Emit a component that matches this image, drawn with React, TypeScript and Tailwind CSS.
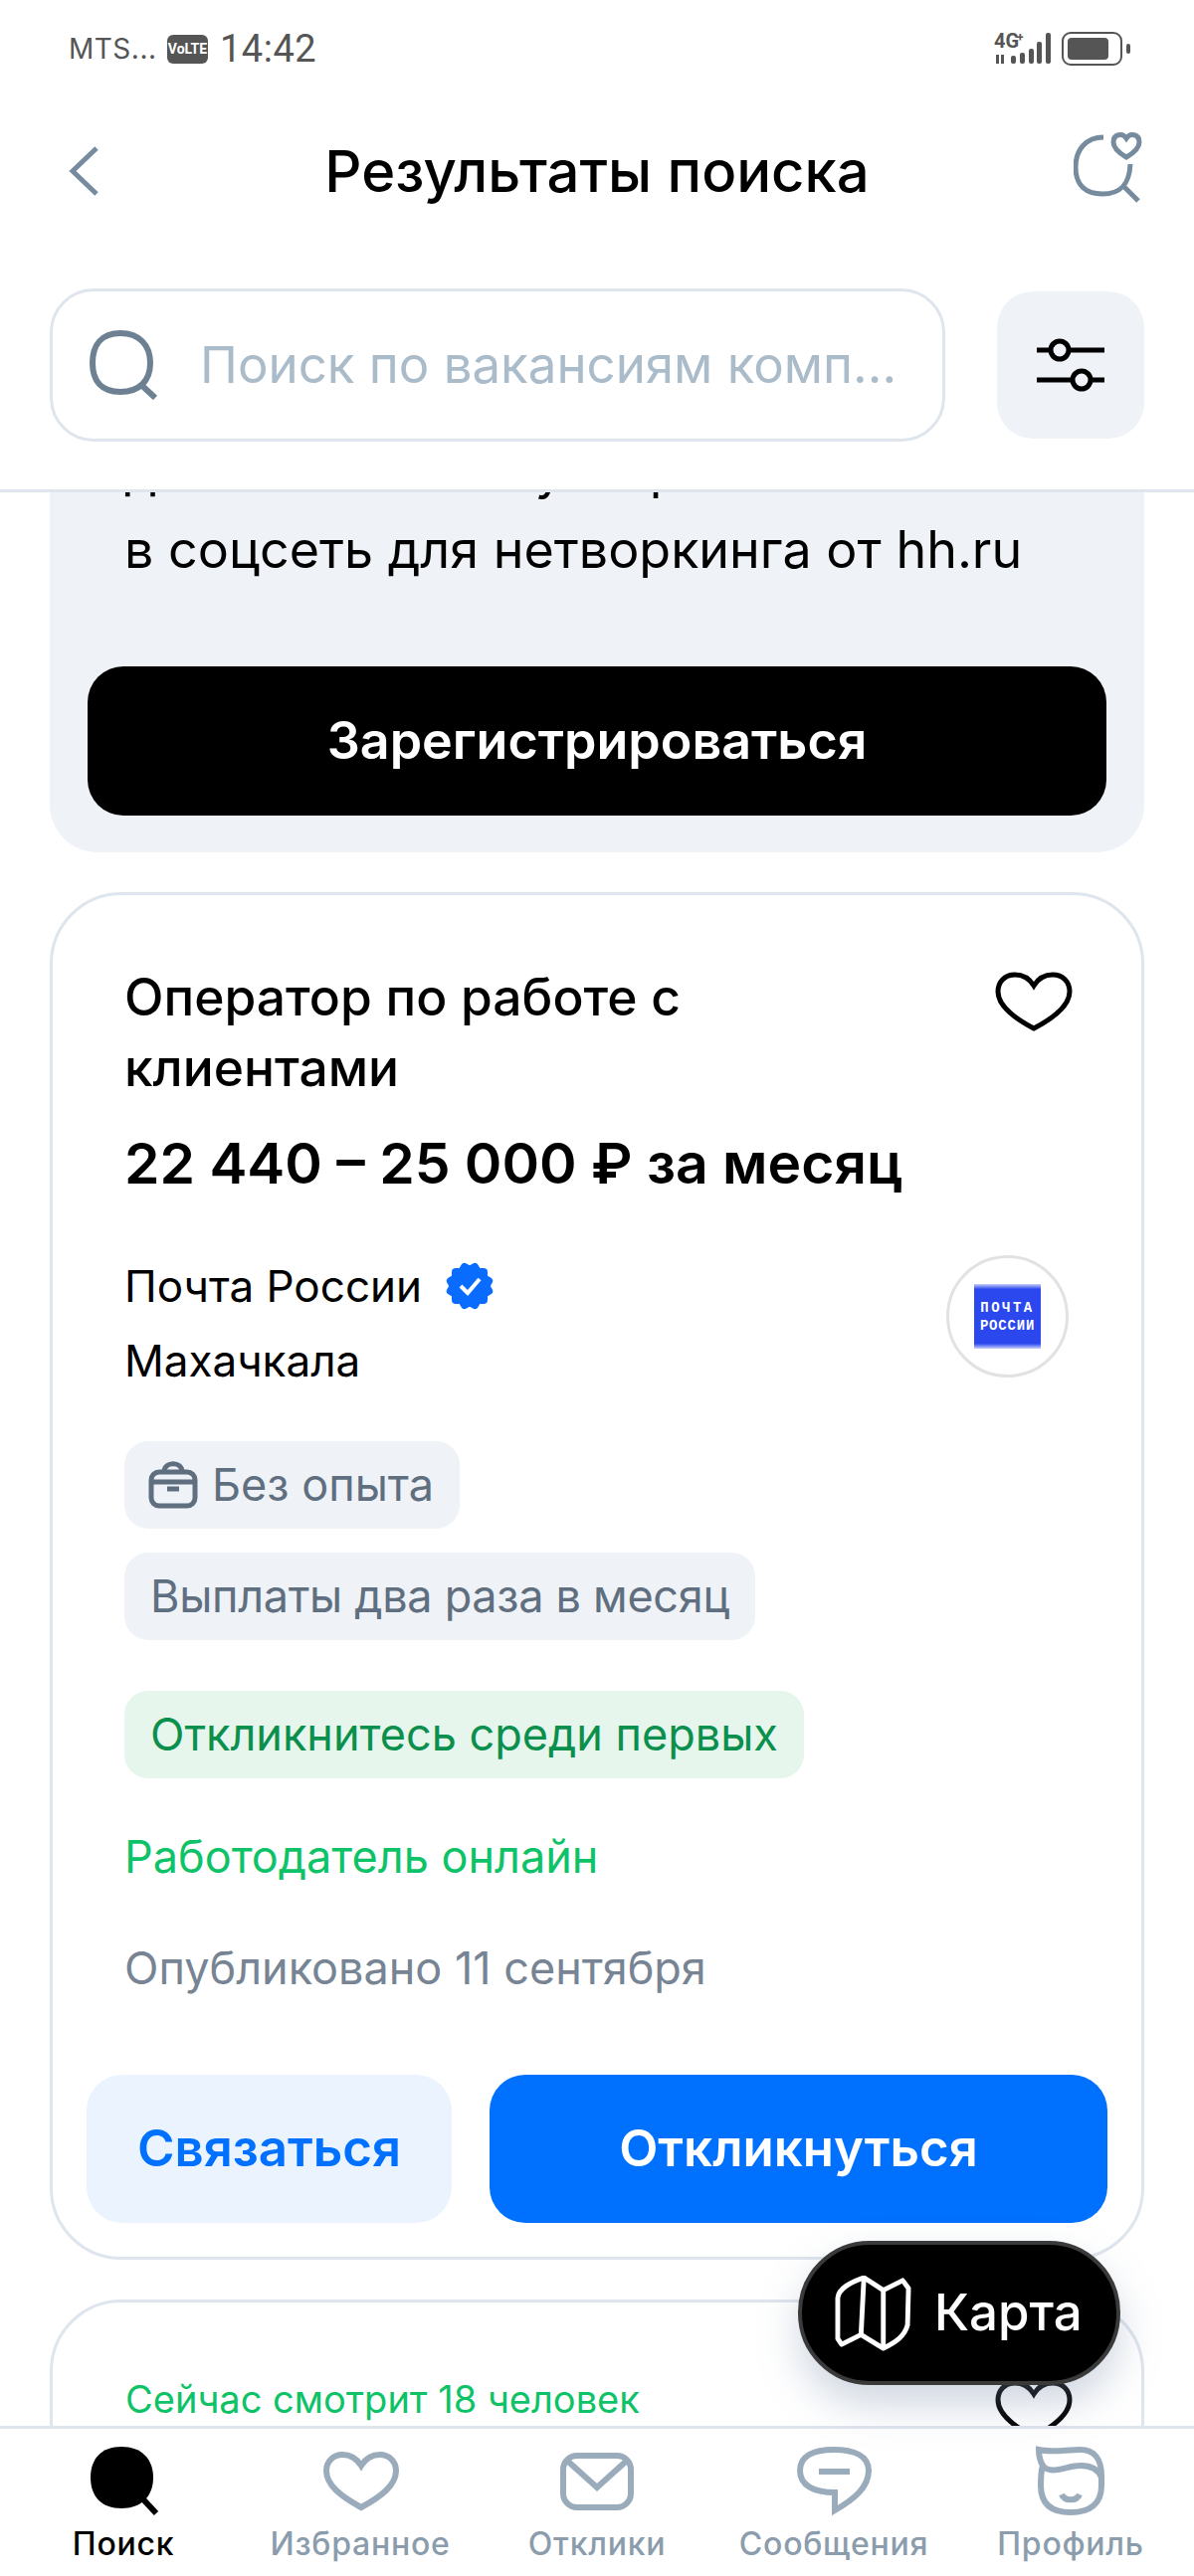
import React from 'react'

const Pill = ({ children }: { children: React.ReactNode }) => (
  <div className="h-[88px] w-fit flex items-center px-[26px] rounded-[24px] bg-[#eff3f8] text-[#5f6f7f] text-[45px]">
    {children}
  </div>
)

const Heart = ({ className }: { className?: string }) => (
  <svg viewBox="0 0 78 60" className={className} fill="none" stroke="currentColor" strokeWidth="5">
    <path d="M39 14C34 6 27 3 20 3 10 3 3 10 3 20c0 14 15 26 36 37 21-11 36-23 36-37 0-10-7-17-17-17-7 0-14 3-19 11z" />
  </svg>
)

const tabs = [
  {
    label: 'Поиск',
    icon: (
      <>
        <path d="M38 1C58 1 70 13 70 32 70 51 58 63 38 63 18 63 7 51 7 32 7 13 18 1 38 1z" fill="#000" />
        <path d="M60 54l13 14" stroke="#000" strokeWidth="6" fill="none" />
      </>
    ),
  },
  {
    label: 'Избранное',
    icon: (
      <path
        d="M41 20C36 12 29 9 22 9 13 9 6 16 6 25c0 15 15 26 35 37 20-11 35-22 35-37 0-9-7-16-16-16-7 0-14 3-19 11z"
        fill="none"
        stroke="#9aabbc"
        strokeWidth="6"
      />
    ),
  },
  {
    label: 'Отклики',
    icon: (
      <g fill="none" stroke="#9aabbc" strokeWidth="6">
        <rect x="6" y="10" width="68" height="52" rx="14" />
        <path d="M9 14l31 28 31-28" />
      </g>
    ),
  },
  {
    label: 'Сообщения',
    icon: (
      <>
        <path
          d="M41 65V47C20 47 6 40 6 25 6 10 20 4 40 4c20 0 35 6 35 21 0 17-15 29-34 40z"
          fill="none"
          stroke="#9aabbc"
          strokeWidth="6"
        />
        <rect x="25" y="23" width="31" height="6" fill="#9aabbc" />
      </>
    ),
  },
  {
    label: 'Профиль',
    icon: (
      <g fill="none" stroke="#9aabbc" strokeWidth="6">
        <path d="M8 4c12 3 27 0 42 0 14 0 21 10 21 26v10c0 18-11 27-31 27S10 58 10 40c0-8 0-14 2-20C9 15 8 10 8 4z" />
        <path d="M12 20c8 10 24 0 38 0 10 0 18 4 21 12" />
        <path d="M31 49c3 7 15 7 18 0" />
      </g>
    ),
  },
]

export default function App() {
  return (
    <div className="relative w-[1200px] h-[2590px] flex flex-col overflow-hidden bg-white text-black font-['Inter',sans-serif]">
      {/* Status bar */}
      <div className="h-[90px] shrink-0 flex items-center justify-between pt-[8px] pl-[69px] pr-[72px] text-[#555555]">
        <div className="flex items-center">
          <span className="text-[28px] w-[99px] tracking-[0.5px]">MTS...</span>
          <span className="w-[41px] h-[29px] rounded-[6px] bg-[#555555] text-white text-[14px] font-bold flex items-center justify-center font-['Roboto',sans-serif]">
            VoLTE
          </span>
          <span className="ml-[12px] text-[38px] font-['Roboto',sans-serif] tracking-[0.5px]">14:42</span>
        </div>
        <div className="flex items-center gap-[10px]">
          <svg width="58" height="38" viewBox="0 -6 58 38" fill="#555555" className="-mt-[6px]">
            <text x="0" y="15" fontSize="20" fontWeight="700" fontFamily="Roboto, sans-serif">4G</text>
            <text x="23" y="9" fontSize="12" fontWeight="700" fontFamily="Roboto, sans-serif">+</text>
            <rect x="2" y="22" width="3" height="9" />
            <rect x="7" y="22" width="3" height="9" />
            <rect x="17" y="23" width="5" height="8" rx="2" />
            <rect x="26" y="20" width="5" height="11" rx="2" />
            <rect x="35" y="16" width="5" height="15" rx="2" />
            <rect x="43" y="9" width="5" height="22" rx="2" />
            <rect x="52" y="0" width="5" height="31" rx="2" />
          </svg>
          <div className="relative w-[61px] h-[34px] rounded-[9px] border-2 border-[#555555] p-[4px]">
            <div className="w-[41px] h-full rounded-[4px] bg-[#555555]" />
            <div className="absolute right-[-10px] top-[10px] w-[4px] h-[10px] rounded-[2px] bg-[#555555]" />
          </div>
        </div>
      </div>

      {/* Header */}
      <div className="h-[164px] shrink-0 grid grid-cols-[1fr_auto_1fr] items-center px-[49px]">
        <svg width="30" height="50" viewBox="0 0 30 50" fill="none" stroke="#768c9e" strokeWidth="5" className="ml-[20px]">
          <path d="M28 2L4 25l24 23" />
        </svg>
        <h1 className="text-[58px] font-medium whitespace-nowrap">Результаты поиска</h1>
        <svg width="72" height="72" viewBox="0 0 72 72" fill="none" stroke="#768c9e" strokeWidth="5" className="justify-self-end -mt-[8px]">
          <path d="M30 6C13 6 2 18 2 36c0 19 11 27 27 27 18 0 27-9 28-30" />
          <path d="M51 56l14 14" />
          <path d="M53 26c-7-4-13-9-13-15 0-8 9-10 13-4 4-6 13-4 13 4 0 6-6 11-13 15z" />
        </svg>
      </div>

      {/* Search row */}
      <div className="shrink-0 mt-[36px] px-[50px] pb-[48px] flex items-center gap-[52px] border-b-[3px] border-[#dfe5ed]">
        <div className="w-[900px] h-[154px] rounded-[44px] border-[3px] border-[#dfe5ed] flex items-center pl-[37px]">
          <svg width="70" height="70" viewBox="0 0 70 70" fill="none" stroke="#6d8193" strokeWidth="6" className="shrink-0">
            <path d="M31 3c19 0 30 12 30 30S50 62 31 62 3 51 3 33 12 3 31 3z" />
            <path d="M52 55l14 13" />
          </svg>
          <span className="ml-[41px] text-[51px] text-[#aabbca] whitespace-nowrap">Поиск по вакансиям комп...</span>
        </div>
        <div className="w-[148px] h-[148px] rounded-[36px] bg-[#eff3f8] flex items-center justify-center">
          <svg width="68" height="58" viewBox="0 0 68 58" fill="none" stroke="#000" strokeWidth="5">
            <path d="M0 14h14M32 14h36M0 44h36M54 44h14" />
            <circle cx="23" cy="14" r="9" />
            <circle cx="45" cy="44" r="9" />
          </svg>
        </div>
      </div>

      {/* Scrolled content */}
      <div className="flex-1 min-h-0 overflow-hidden px-[50px]">
        <div className="-mt-[62px] bg-[#eff3f8] rounded-b-[48px] px-[38px] pb-[37px]">
          <p className="text-[52px] leading-[80px] pl-[37px] whitespace-nowrap">
            добавляйтесь к уже рабочим
            <br />в соцсеть для нетворкинга от hh.ru
          </p>
          <button className="mt-[77px] w-full h-[150px] rounded-[36px] bg-black text-white text-[52px] font-semibold">
            Зарегистрироваться
          </button>
        </div>

        <div className="mt-[40px] rounded-[72px] border-[3px] border-[#dfe5ed] px-[34px] pt-[67px] pb-[34px]">
          <div className="pl-[38px] pr-[39px]">
            <div className="flex justify-between items-start">
              <h2 className="text-[51.5px] leading-[71px] font-medium">
                Оператор по работе с<br />
                клиентами
              </h2>
              <Heart className="w-[78px] h-[60px] mt-[10px] -mr-[4px]" />
            </div>
            <div className="mt-[25px] text-[57px] leading-[72px] font-semibold whitespace-nowrap">
              22 440 – 25 000 ₽ за месяц
            </div>
            <div className="mt-[51px] flex justify-between items-start">
              <div className="text-[44px] leading-[72px]">
                <div className="flex items-center gap-[22px]">
                  Почта России
                  <svg width="52" height="52" viewBox="0 0 52 52">
                    <g fill="#0a6cff">
                      <rect x="8" y="8" width="36" height="36" rx="4" />
                      <rect x="8" y="8" width="36" height="36" rx="4" transform="rotate(30 26 26)" />
                      <rect x="8" y="8" width="36" height="36" rx="4" transform="rotate(60 26 26)" />
                    </g>
                    <path d="M17 26l7 7 12-14" fill="none" stroke="#fff" strokeWidth="4" />
                  </svg>
                </div>
                <div className="mt-[3px]">Махачкала</div>
              </div>
              <div className="mt-[5px] w-[123px] h-[123px] rounded-full border-[3px] border-[#e2e2e2] flex items-center justify-center">
                <div className="w-[67px] h-[65px] bg-[linear-gradient(to_bottom,#c8d0fb,#2b47ee_8%,#2b47ee_92%,#c8d0fb)] text-white text-[14px] leading-[18px] font-bold flex flex-col items-center justify-center font-['Liberation_Mono',monospace]">
                  <span className="tracking-[2.5px]">ПОЧТА</span>
                  <span className="tracking-[0.8px]">РОССИИ</span>
                </div>
              </div>
            </div>

            <div className="mt-[45px] flex flex-col gap-[24px]">
              <Pill>
                <svg width="50" height="48" viewBox="0 0 50 48" fill="none" stroke="#5f6f7f" strokeWidth="5" className="mr-[14px] -ml-[2px]">
                  <rect x="3" y="11" width="44" height="34" rx="8" />
                  <path d="M16 11c0-11 18-11 18 0" />
                  <path d="M3 21h44" />
                  <path d="M19 28h12" />
                </svg>
                Без опыта
              </Pill>
              <Pill>
                <span className="tracking-[-0.3px]">Выплаты два раза в месяц</span>
              </Pill>
            </div>
            <div className="mt-[51px] h-[88px] w-fit flex items-center px-[26px] rounded-[24px] bg-[#e6f6ec] text-[#0a8f4d] text-[45px]">
              Откликнитесь среди первых
            </div>
            <div className="mt-[43px] text-[45px] leading-[72px] text-[#0dc267]">Работодатель онлайн</div>
            <div className="mt-[40px] text-[45px] leading-[72px] text-[#768494]">Опубликовано 11 сентября</div>
          </div>
          <div className="mt-[71px] flex gap-[38px]">
            <button className="w-[367px] h-[149px] rounded-[36px] bg-[#ebf4fe] text-[#0070ff] text-[51px] font-semibold">
              Связаться
            </button>
            <button className="flex-1 h-[149px] rounded-[36px] bg-[#0070ff] text-white text-[51px] font-semibold">
              Откликнуться
            </button>
          </div>
        </div>

        <div className="mt-[40px] rounded-[72px] border-[3px] border-[#dfe5ed] px-[73px] pt-[67px] h-[400px] flex justify-between items-start">
          <div className="text-[38px] leading-[60px] text-[#0dc267]">Сейчас смотрит 18 человек</div>
          <Heart className="w-[78px] h-[60px] mt-[11px] -mr-[4px]" />
        </div>
      </div>

      {/* Tab bar */}
      <div className="shrink-0 h-[151px] border-t-[3px] border-[#dfe5ed] bg-white grid grid-cols-5 px-[5px] pt-[17px]">
        {tabs.map((tab, i) => (
          <div key={tab.label} className="flex flex-col items-center">
            <svg width="80" height="72" viewBox="0 0 80 72">
              {tab.icon}
            </svg>
            <span className={`mt-[7px] text-[32px] leading-[40px] font-medium tracking-[0.75px] ${i === 0 ? 'text-black' : 'text-[#8b9cad]'}`}>
              {tab.label}
            </span>
          </div>
        ))}
      </div>

      {/* Map button */}
      <button className="absolute left-[802px] top-[2253px] w-[324px] h-[145px] rounded-[72px] bg-black border-[4px] border-[#3a3a3a] flex items-center pl-[33px] shadow-[0_20px_40px_rgba(120,140,170,0.35)]">
        <svg width="78" height="76" viewBox="-2 -2 78 78" fill="none" stroke="#fff" strokeWidth="5" strokeLinejoin="round" className="shrink-0">
          <path d="M27 0l20 13 20-10 6 8-1 38c-3 12-13 18-25 24l-23-14-20 10-4-6V21C1 11 13 5 27 0z" />
          <path d="M27 0l-3 59M47 13v60" />
        </svg>
        <span className="ml-[22px] text-white text-[51px] font-medium">Карта</span>
      </button>
    </div>
  )
}
